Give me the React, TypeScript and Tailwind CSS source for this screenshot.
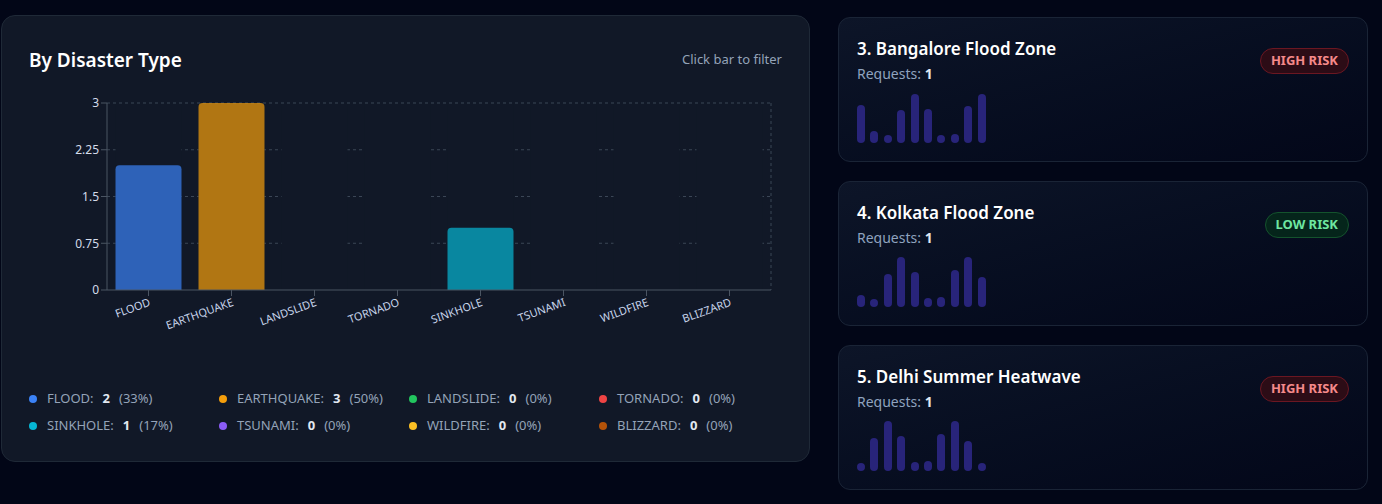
import React from "react";

const types = [
  { name: "FLOOD", value: 2, pct: 33, color: "#3b82f6", dot: "bg-[#3b82f6]" },
  { name: "EARTHQUAKE", value: 3, pct: 50, color: "#f59e0b", dot: "bg-[#f59e0b]" },
  { name: "LANDSLIDE", value: 0, pct: 0, color: "#22c55e", dot: "bg-[#22c55e]" },
  { name: "TORNADO", value: 0, pct: 0, color: "#ef4444", dot: "bg-[#ef4444]" },
  { name: "SINKHOLE", value: 1, pct: 17, color: "#06b6d4", dot: "bg-[#06b6d4]" },
  { name: "TSUNAMI", value: 0, pct: 0, color: "#8b5cf6", dot: "bg-[#8b5cf6]" },
  { name: "WILDFIRE", value: 0, pct: 0, color: "#fbbf24", dot: "bg-[#fbbf24]" },
  { name: "BLIZZARD", value: 0, pct: 0, color: "#b45309", dot: "bg-[#b45309]" },
];

const zones = [
  { title: "3. Bangalore Flood Zone", requests: 1, risk: "HIGH", bars: [38, 12, 8, 33, 49, 34, 8, 9, 37, 49] },
  { title: "4. Kolkata Flood Zone", requests: 1, risk: "LOW", bars: [12, 8, 33, 50, 35, 9, 10, 37, 50, 30] },
  { title: "5. Delhi Summer Heatwave", requests: 1, risk: "HIGH", bars: [8, 33, 50, 35, 9, 10, 37, 50, 30, 8] },
];

// chart geometry (svg coords)
const LEFT = 78;
const RIGHT = 742;
const TOP = 15;
const BOTTOM = 202;
const MAX = 3;
const BAND = (RIGHT - LEFT) / types.length;
const BAR_W = 66;
const yOf = (v: number) => BOTTOM - (v / MAX) * (BOTTOM - TOP);

const topRounded = (x: number, y: number, w: number, h: number, r: number) =>
  `M${x},${y + h} L${x},${y + r} Q${x},${y} ${x + r},${y} L${x + w - r},${y} Q${x + w},${y} ${x + w},${y + r} L${x + w},${y + h} Z`;

const Chart = () => {
  const ticks = [0, 0.75, 1.5, 2.25, 3];
  return (
    <svg width={753} height={301} className="block mt-[14px]">
      {/* grid */}
      {ticks.slice(1).map((t) => (
        <line key={t} x1={LEFT} x2={RIGHT} y1={yOf(t)} y2={yOf(t)} stroke="#3b4656" strokeDasharray="3 3" />
      ))}
      <line x1={RIGHT} x2={RIGHT} y1={TOP} y2={BOTTOM} stroke="#3b4656" strokeDasharray="3 3" />

      {/* bar backgrounds */}
      {types.map((t, i) => {
        const cx = LEFT + BAND * i + BAND / 2;
        return <rect key={t.name} x={cx - BAR_W / 2} y={TOP + 1} width={BAR_W} height={BOTTOM - TOP - 1} fill="#111827" />;
      })}

      {/* bars */}
      {types.map((t, i) => {
        if (!t.value) return null;
        const cx = LEFT + BAND * i + BAND / 2;
        const y = yOf(t.value);
        return <path key={t.name} d={topRounded(cx - BAR_W / 2, y, BAR_W, BOTTOM - y, 4)} fill={t.color} fillOpacity={0.7} />;
      })}

      {/* axes */}
      <line x1={LEFT} x2={LEFT} y1={TOP} y2={BOTTOM} stroke="#4b5563" />
      <line x1={LEFT} x2={RIGHT} y1={BOTTOM} y2={BOTTOM} stroke="#4b5563" />
      {ticks.map((t) => (
        <g key={t}>
          <line x1={LEFT - 6} x2={LEFT} y1={yOf(t)} y2={yOf(t)} stroke="#4b5563" />
          <text x={LEFT - 8} y={yOf(t)} dy="0.355em" textAnchor="end" fontSize={12} fill="#d4dcea">
            {t}
          </text>
        </g>
      ))}
      {types.map((t, i) => {
        const cx = LEFT + BAND * i + BAND / 2;
        return (
          <g key={t.name}>
            <line x1={cx} x2={cx} y1={BOTTOM} y2={BOTTOM + 6} stroke="#4b5563" />
            <text
              x={cx}
              y={BOTTOM + 8}
              dy="0.71em"
              textAnchor="end"
              fontSize={11}
              fill="#c7d4ea"
              transform={`rotate(-20 ${cx} ${BOTTOM + 8})`}
            >
              {t.name}
            </text>
          </g>
        );
      })}
    </svg>
  );
};

const RiskBadge = ({ risk }: { risk: string }) =>
  risk === "HIGH" ? (
    <span className="mt-[2px] rounded-full border border-[#6b1722] bg-[#2c0c16] px-[10px] py-[2px] text-[13px] font-bold text-[#f58a8a]">
      HIGH RISK
    </span>
  ) : (
    <span className="mt-[2px] rounded-full border border-[#14532d] bg-[#05251b] px-[10px] py-[2px] text-[13px] font-bold text-[#6ee7a0]">
      LOW RISK
    </span>
  );

export default function App() {
  return (
    <div className="min-h-screen bg-[#020617] font-['Noto_Sans',sans-serif]">
      <div className="flex items-start gap-[28px] pl-[1px] pt-[15px]">
        {/* Disaster type chart */}
        <div className="w-[809px] rounded-[14px] border border-[#1f2937] bg-[#111827] px-[27px] pt-[30px] pb-[25px]">
          <div className="flex items-center justify-between">
            <h3 className="text-[19px] leading-7 font-semibold text-white">By Disaster Type</h3>
            <span className="text-[13px] text-[#94a3b8]">Click bar to filter</span>
          </div>

          <Chart />

          <div className="grid grid-cols-[190px_190px_190px_190px] gap-y-[7px]">
            {types.map((t) => (
              <div key={t.name} className="flex items-center h-5 text-[13px] text-[#94a3b8]">
                <span className={`w-2 h-2 rounded-full ${t.dot}`} />
                <span className="ml-[10px]">{t.name}:</span>
                <span className="ml-[9px] font-bold text-[#e2e8f0]">{t.value}</span>
                <span className="ml-[9px]">({t.pct}%)</span>
              </div>
            ))}
          </div>
        </div>

        {/* Zone list */}
        <div className="mt-[2px] flex w-[530px] flex-col gap-[19px]">
          {zones.map((z) => (
            <div
              key={z.title}
              className="rounded-xl border border-[#1a2436] bg-linear-to-br from-[#0d1528] to-[#030719] p-[18px]"
            >
              <div className="flex items-center justify-between">
                <div>
                  <div className="text-[17px] leading-[26px] font-semibold text-white">{z.title}</div>
                  <div className="mt-[2px] text-sm leading-5 text-[#8fa3bf]">
                    Requests: <span className="font-bold text-[#e2e8f0]">{z.requests}</span>
                  </div>
                </div>
                <RiskBadge risk={z.risk} />
              </div>
              <div className="mt-[9px] flex h-[50px] items-end gap-[5.4px]">
                {z.bars.map((h, i) => (
                  <div key={i} className="w-2 rounded-full bg-[#28247a]" style={{ height: h }} />
                ))}
              </div>
            </div>
          ))}
        </div>
      </div>
    </div>
  );
}
